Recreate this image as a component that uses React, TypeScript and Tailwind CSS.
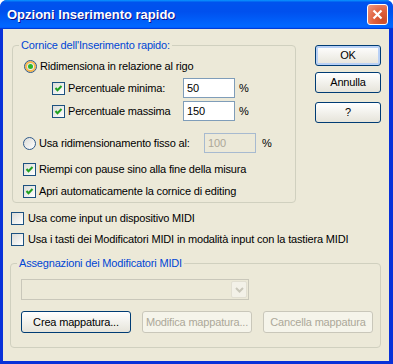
import React from "react";

function Check({ checked = false }: { checked?: boolean }) {
  return (
    <span className="flex h-[13px] w-[13px] shrink-0 items-center justify-center border border-[#1C5180] bg-linear-to-br from-[#DCDCD7] to-white">
      {checked && (
        <svg width="9" height="9" viewBox="0 0 9 9">
          <path d="M1.5 4 L3.5 6.2 L7.5 2" stroke="#21A121" strokeWidth="2" fill="none" />
        </svg>
      )}
    </span>
  );
}

function Radio({ selected = false }: { selected?: boolean }) {
  return (
    <span
      className={`flex h-[13px] w-[13px] shrink-0 items-center justify-center rounded-full border border-[#2F5A8A] bg-linear-to-br from-[#DCDCD7] to-white ${
        selected ? "shadow-[inset_0_0_0_2px_#F8B74E]" : ""
      }`}
    >
      {selected && <span className="h-[5px] w-[5px] rounded-full bg-[#2DB52D]" />}
    </span>
  );
}

function XpButton({
  children,
  className = "",
  isDefault = false,
  disabled = false,
}: {
  children: React.ReactNode;
  className?: string;
  isDefault?: boolean;
  disabled?: boolean;
}) {
  const look = disabled
    ? "border-[#C9C7BA] bg-[#F5F4EA] text-[#ACA899]"
    : "border-[#003C74] bg-linear-to-b from-white to-[#E6E4DA] text-black";
  return (
    <div
      className={`flex items-center justify-center rounded-[3px] border ${look} ${
        isDefault ? "shadow-[inset_0_0_0_2px_#B9D1F6]" : ""
      } ${className}`}
    >
      {children}
    </div>
  );
}

function GroupLabel({ children }: { children: React.ReactNode }) {
  return (
    <div className="-mt-[8px] ml-[6px] h-[14px] w-fit bg-[#ECE9D8] px-[2px] leading-[14px] text-[#0046D5]">
      {children}
    </div>
  );
}

export default function App() {
  return (
    <div className="flex h-[364px] w-[393px] flex-col rounded-t-[7px] bg-[#0831D9] font-['Liberation_Sans',Arial,sans-serif] text-[11px] leading-[13px] tracking-[-0.17px] text-black">
      {/* title bar */}
      <div className="flex h-[29px] shrink-0 items-center justify-between rounded-t-[7px] bg-[linear-gradient(180deg,#0997ff,#0053ee_8%,#0050ee_40%,#0066ff_88%,#0066ff_93%,#005bff_95%,#003dd7_96%,#003dd7)] pl-[7px] pr-[5px]">
        <span className="text-[13px] font-bold tracking-normal text-white [text-shadow:1px_1px_#0f1089]">
          Opzioni Inserimento rapido
        </span>
        <div className="flex h-[21px] w-[21px] items-center justify-center rounded-[3px] border border-white bg-[radial-gradient(circle_at_80%_80%,#CC4C2A,#E0613E_45%,#F09A82)]">
          <svg width="11" height="11" viewBox="0 0 11 11">
            <path d="M1.5 1.5 L9.5 9.5 M9.5 1.5 L1.5 9.5" stroke="white" strokeWidth="2.2" />
          </svg>
        </div>
      </div>

      {/* body */}
      <div className="mb-[3px] ml-[3px] mr-[4px] flex flex-1 flex-col bg-[#ECE9D8]">
        <div className="flex items-start">
          {/* group 1 */}
          <div className="ml-[9px] mt-[16px] flex w-[284px] flex-col rounded-[4px] border border-[#D0D0BF]">
            <GroupLabel>Cornice dell'Inserimento rapido:</GroupLabel>

            <div className="ml-[11px] mt-[7px] flex h-[15px] items-center gap-[3px]">
              <Radio selected />
              <span>Ridimensiona in relazione al rigo</span>
            </div>

            <div className="ml-[39px] mt-[4px] flex h-[20px] items-center">
              <Check checked />
              <span className="ml-[3px] w-[115px]">Percentuale minima:</span>
              <div className="flex h-[20px] w-[52px] items-center border border-[#7F9DB9] bg-white pl-[3px]">50</div>
              <span className="ml-[4px]">%</span>
            </div>

            <div className="ml-[39px] mt-[3px] flex h-[20px] items-center">
              <Check checked />
              <span className="ml-[3px] w-[115px]">Percentuale massima</span>
              <div className="flex h-[20px] w-[52px] items-center border border-[#7F9DB9] bg-white pl-[3px]">150</div>
              <span className="ml-[4px]">%</span>
            </div>

            <div className="ml-[10px] mt-[12px] flex h-[20px] items-center">
              <Radio />
              <span className="ml-[3px] w-[165px]">Usa ridimensionamento fisso al:</span>
              <div className="flex h-[20px] w-[52px] items-center border border-[#A7BAD0] bg-[#ECE9D8] pl-[3px] text-[#ACA899]">
                100
              </div>
              <span className="ml-[6px]">%</span>
            </div>

            <div className="ml-[10px] mt-[6px] flex h-[21px] items-center gap-[3px]">
              <Check checked />
              <span>Riempi con pause sino alla fine della misura</span>
            </div>

            <div className="ml-[10px] mt-[1px] flex h-[21px] items-center gap-[3px]">
              <Check checked />
              <span>Apri automaticamente la cornice di editing</span>
            </div>
          </div>

          {/* dialog buttons */}
          <div className="ml-[19px] mt-[16px] flex flex-col">
            <XpButton isDefault className="h-[21px] w-[66px]">OK</XpButton>
            <XpButton className="mt-[6px] h-[21px] w-[66px]">Annulla</XpButton>
            <XpButton className="mt-[9px] h-[21px] w-[66px]">?</XpButton>
          </div>
        </div>

        <div className="ml-[8px] mt-[9px] flex h-[13px] items-center gap-[4px]">
          <Check />
          <span>Usa come input un dispositivo MIDI</span>
        </div>
        <div className="ml-[8px] mt-[8px] flex h-[13px] items-center gap-[4px]">
          <Check />
          <span>Usa i tasti dei Modificatori MIDI in modalità input con la tastiera MIDI</span>
        </div>

        {/* group 2 */}
        <div className="ml-[7px] mt-[17px] flex w-[371px] flex-col rounded-[4px] border border-[#D0D0BF] pb-[14px]">
          <GroupLabel>Assegnazioni dei Modificatori MIDI</GroupLabel>

          <div className="ml-[10px] mt-[9px] flex h-[21px] w-[228px] items-center justify-end border border-[#C9C7BA] bg-[#ECE9D8] pr-[1px]">
            <div className="flex h-[17px] w-[16px] items-center justify-center rounded-[2px] border border-[#E2DFD2] bg-[#F3F1E8]">
              <svg width="9" height="6" viewBox="0 0 9 6">
                <path d="M1 1 L4.5 4.5 L8 1" stroke="#C9C7BA" strokeWidth="2" fill="none" />
              </svg>
            </div>
          </div>

          <div className="ml-[10px] mt-[11px] flex gap-[11px]">
            <XpButton className="h-[22px] w-[110px]">Crea mappatura...</XpButton>
            <XpButton disabled className="h-[22px] w-[110px]">Modifica mappatura...</XpButton>
            <XpButton disabled className="h-[22px] w-[110px]">Cancella mappatura</XpButton>
          </div>
        </div>
      </div>
    </div>
  );
}
